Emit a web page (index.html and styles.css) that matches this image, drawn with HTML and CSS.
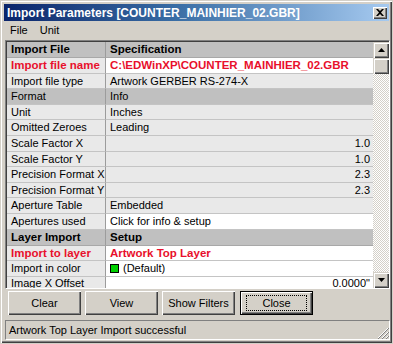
FILE: index.html
```html
<!DOCTYPE html>
<html>
<head>
<meta charset="utf-8">
<link rel="stylesheet" href="styles.css">
</head>
<body>
<div class="window">
  <div class="titlebar">
    <span class="title">Import Parameters [COUNTER_MAINHIER_02.GBR]</span>
    <span class="tclose">
      <svg width="8" height="7" viewBox="0 0 8 7"><path d="M0 0h2l2 2 2-2h2L5 3.5 8 7H6L4 5 2 7H0l3-3.5z" fill="#000"/></svg>
    </span>
  </div>
  <div class="menubar"><span class="mi">File</span><span class="mi">Unit</span></div>
  <div class="gridbox">
    <div class="grid">
      <div class="row hdr"><div class="c l">Import File</div><div class="c v">Specification</div></div>
      <div class="row red"><div class="c l">Import file name</div><div class="c v w">C:\EDWinXP\COUNTER_MAINHIER_02.GBR</div></div>
      <div class="row"><div class="c l">Import file type</div><div class="c v">Artwork GERBER RS-274-X</div></div>
      <div class="row sec"><div class="c l">Format</div><div class="c v">Info</div></div>
      <div class="row"><div class="c l">Unit</div><div class="c v">Inches</div></div>
      <div class="row"><div class="c l">Omitted Zeroes</div><div class="c v">Leading</div></div>
      <div class="row"><div class="c l">Scale Factor X</div><div class="c v r">1.0</div></div>
      <div class="row"><div class="c l">Scale Factor Y</div><div class="c v r">1.0</div></div>
      <div class="row"><div class="c l">Precision Format X</div><div class="c v r">2.3</div></div>
      <div class="row"><div class="c l">Precision Format Y</div><div class="c v r">2.3</div></div>
      <div class="row"><div class="c l">Aperture Table</div><div class="c v">Embedded</div></div>
      <div class="row"><div class="c l">Apertures used</div><div class="c v w">Click for info &amp; setup</div></div>
      <div class="row hdr"><div class="c l">Layer Import</div><div class="c v">Setup</div></div>
      <div class="row red"><div class="c l">Import to layer</div><div class="c v w">Artwork Top Layer</div></div>
      <div class="row"><div class="c l">Import in color</div><div class="c v w"><span class="swatch"></span>(Default)</div></div>
      <div class="row last"><div class="c l">Image X Offset</div><div class="c v w r">0.0000"</div></div>
    </div>
    <div class="vscroll">
      <div class="sbtn"><svg width="7" height="4" viewBox="0 0 7 4"><path d="M3.5 0L7 4H0z" fill="#000"/></svg></div>
      <div class="thumb"></div>
      <div class="track"></div>
      <div class="sbtn"><svg width="7" height="4" viewBox="0 0 7 4"><path d="M0 0h7L3.5 4z" fill="#000"/></svg></div>
    </div>
  </div>
  <div class="buttons">
    <div class="btn">Clear</div>
    <div class="btn">View</div>
    <div class="btn">Show Filters</div>
    <div class="btn def"><span class="focus">Close</span></div>
  </div>
  <div class="status">
    <span>Artwork Top Layer Import successful</span>
    <svg class="grip" width="12" height="12" viewBox="0 0 12 12">
      <path d="M11 1L1 11M11 5L5 11M11 9L9 11" stroke="#fff" stroke-width="1"/>
      <path d="M12 1L1 12M12 5L5 12M12 9L9 12" stroke="#808080" stroke-width="1"/>
    </svg>
  </div>
</div>
</body>
</html>
```

FILE: styles.css
```css
* { box-sizing: border-box; }
html, body { margin: 0; padding: 0; }
body {
  width: 393px;
  height: 344px;
  overflow: hidden;
  font-family: "Liberation Sans", Arial, sans-serif;
  font-size: 11px;
  color: #000;
  background: #d4d0c8;
}
.window {
  width: 393px;
  height: 344px;
  background: #d4d0c8;
  border: 1px solid #d4d0c8;
  box-shadow: inset 1px 1px 0 #fff, inset -1px -1px 0 #404040, inset -2px -2px 0 #808080;
  padding: 3px 3px 3px 3px;
  display: flex;
  flex-direction: column;
}
.titlebar {
  height: 17px;
  background: linear-gradient(to right, #0a246a 0%, #3a6ea5 45%, #a6caf0 100%);
  color: #fff;
  font-weight: bold;
  font-size: 12px;
  display: flex;
  align-items: center;
  justify-content: space-between;
  padding: 0 2px 0 3px;
}
.title { white-space: nowrap; }
.tclose {
  width: 14px;
  height: 12px;
  background: #d4d0c8;
  box-shadow: inset 1px 1px 0 #fff, inset -1px -1px 0 #404040, inset -2px -2px 0 #808080;
  display: flex;
  align-items: center;
  justify-content: center;
}
.menubar {
  height: 18px;
  display: flex;
  align-items: center;
}
.mi { padding: 0 6px; }
.gridbox {
  margin-top: 1px;
  margin-left: 1px;
  width: 385px;
  height: 249px;
  border-top: 1px solid #808080;
  border-left: 1px solid #808080;
  border-right: 1px solid #fff;
  border-bottom: 1px solid #fff;
  box-shadow: inset 1px 1px 0 #404040;
  padding: 1px 0 0 1px;
  display: flex;
  overflow: hidden;
}
.grid {
  flex: 1;
  display: flex;
  flex-direction: column;
  overflow: hidden;
  background: #fff;
}
.row {
  display: grid;
  grid-template-columns: 99px 1fr;
  height: 15.6px;
  flex: none;
  line-height: 14.6px;
}
.row.hdr { height: 16px; line-height: 15px; }
.row.last { line-height: 13px; }
.c {
  border-bottom: 1px solid #c4c4c4;
  background: #e9e9e9;
  padding-left: 4px;
  white-space: nowrap;
  overflow: hidden;
}
.c.l { border-right: 1px solid #9c9c9c; }
.c.w { background: #fff; }
.c.r { text-align: right; padding-right: 3px; }
.hdr .c { background: #c0c0c0; font-weight: bold; font-size: 11.5px; border-bottom-color: #a8a8a8; }
.sec .c { background: #c0c0c0; }
.red .c { color: #e8102c; font-weight: bold; font-size: 11.5px; }
.swatch {
  display: inline-block;
  width: 9px;
  height: 9px;
  background: #00d000;
  border: 1px solid #000;
  vertical-align: -1px;
  margin-right: 4px;
}
.vscroll {
  width: 16px;
  flex: none;
  display: flex;
  flex-direction: column;
}
.sbtn {
  width: 16px;
  height: 16px;
  flex: none;
  background: #d4d0c8;
  box-shadow: inset 1px 1px 0 #d4d0c8, inset 2px 2px 0 #fff, inset -1px -1px 0 #404040, inset -2px -2px 0 #808080;
  display: flex;
  align-items: center;
  justify-content: center;
}
.thumb {
  height: 16px;
  flex: none;
  background: #d4d0c8;
  box-shadow: inset 1px 1px 0 #d4d0c8, inset 2px 2px 0 #fff, inset -1px -1px 0 #404040, inset -2px -2px 0 #808080;
}
.track {
  flex: 1;
  background-color: #fff;
  background-image: repeating-conic-gradient(#d4d0c8 0 25%, #fff 0 50%);
  background-size: 2px 2px;
}
.buttons {
  display: flex;
  gap: 4px;
  padding: 2px 0 0 4px;
  height: 28px;
}
.btn {
  width: 73px;
  height: 24px;
  background: #d4d0c8;
  box-shadow: inset 1px 1px 0 #fff, inset -1px -1px 0 #404040, inset -2px -2px 0 #808080;
  display: flex;
  align-items: center;
  justify-content: center;
}
.btn.def {
  margin-left: 1px;
  border: 1px solid #000;
}
.focus {
  width: 61px;
  height: 16px;
  border: 1px dotted #000;
  display: flex;
  align-items: center;
  justify-content: center;
}
.status {
  margin-top: 3px;
  margin-left: 1px;
  width: 385px;
  height: 20px;
  border-top: 1px solid #808080;
  border-left: 1px solid #808080;
  border-right: 1px solid #fff;
  border-bottom: 1px solid #fff;
  display: flex;
  align-items: center;
  padding-left: 3px;
  position: relative;
}
.grip { position: absolute; right: 0; bottom: 0; }
```
